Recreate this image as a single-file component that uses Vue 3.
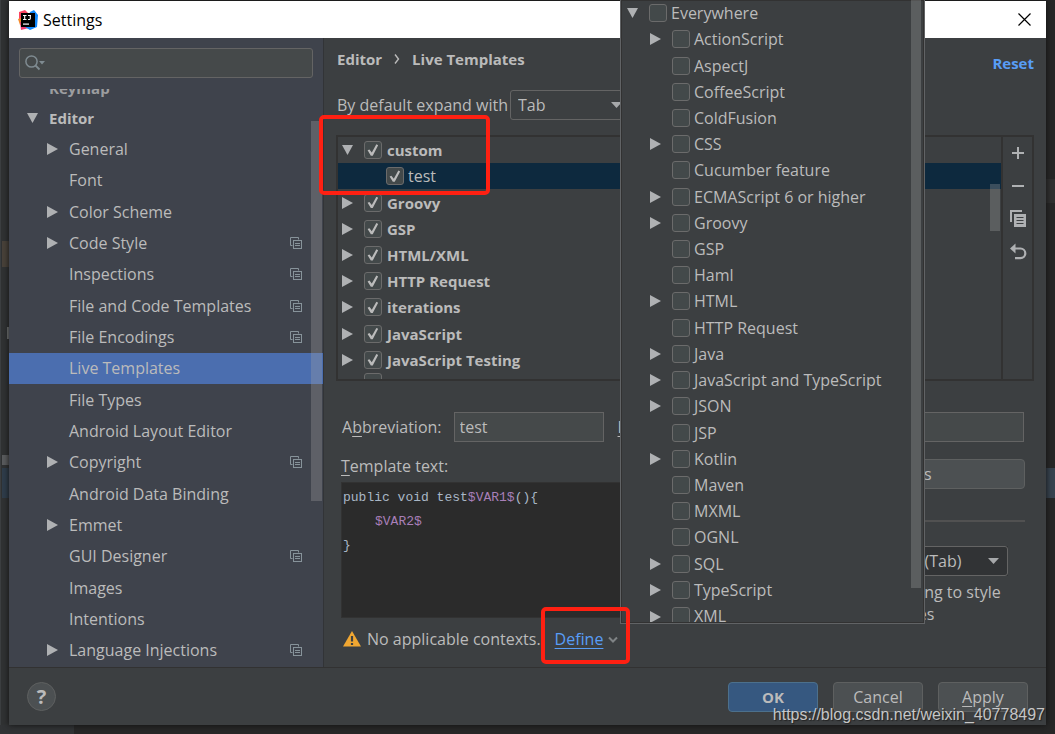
<script setup>
import { ref } from 'vue'

const expandWith = ref('Tab')
const expandTemplate = ref('Default (Tab)')
const abbreviation = ref('test')
const description = ref('')
const query = ref('')

const settings = [
  { name: 'General', arrow: true },
  { name: 'Font' },
  { name: 'Color Scheme', arrow: true },
  { name: 'Code Style', arrow: true, project: true },
  { name: 'Inspections', project: true },
  { name: 'File and Code Templates', project: true },
  { name: 'File Encodings', project: true },
  { name: 'Live Templates', selected: true },
  { name: 'File Types' },
  { name: 'Android Layout Editor' },
  { name: 'Copyright', arrow: true, project: true },
  { name: 'Android Data Binding' },
  { name: 'Emmet', arrow: true },
  { name: 'GUI Designer', project: true },
  { name: 'Images' },
  { name: 'Intentions' },
  { name: 'Language Injections', arrow: true, project: true },
]

const groups = ref([
  { name: 'custom', open: true, on: true },
  { name: 'test', child: true, on: true },
  { name: 'Groovy', on: true },
  { name: 'GSP', on: true },
  { name: 'HTML/XML', on: true },
  { name: 'HTTP Request', on: true },
  { name: 'iterations', on: true },
  { name: 'JavaScript', on: true },
  { name: 'JavaScript Testing', on: true },
])

const contexts = ref([
  { name: 'ActionScript', arrow: true },
  { name: 'AspectJ' },
  { name: 'CoffeeScript' },
  { name: 'ColdFusion' },
  { name: 'CSS', arrow: true },
  { name: 'Cucumber feature' },
  { name: 'ECMAScript 6 or higher', arrow: true },
  { name: 'Groovy', arrow: true },
  { name: 'GSP' },
  { name: 'Haml' },
  { name: 'HTML', arrow: true },
  { name: 'HTTP Request' },
  { name: 'Java', arrow: true },
  { name: 'JavaScript and TypeScript', arrow: true },
  { name: 'JSON', arrow: true },
  { name: 'JSP' },
  { name: 'Kotlin', arrow: true },
  { name: 'Maven' },
  { name: 'MXML' },
  { name: 'OGNL' },
  { name: 'SQL', arrow: true },
  { name: 'TypeScript', arrow: true },
  { name: 'XML', arrow: true },
])
</script>

<template>
  <div class="desktop">
    <div class="ide-left"><i class="mark brown"></i><i class="mark caret"></i><i class="mark grey"></i><i class="mark blue"></i></div>
    <div class="ide-right"><i class="mark band"></i><i class="mark line"></i><i class="mark blue"></i></div>
    <div class="ide-bottom"></div>

    <section class="dialog" aria-label="Settings">
      <header class="titlebar">
        <svg class="logo" width="20" height="20" viewBox="0 0 20 20">
          <path d="M1 2 7 0l4 4-5 9-5-3z" fill="#fc4462" />
          <path d="M0 9 5 7l3 9-6-1z" fill="#f58a2a" />
          <path d="M2 12l6-1 3 7-8 2z" fill="#ef3a72" />
          <path d="M12 2l4-2 4 5-1 12-7 3-5-3z" fill="#1188fb" />
          <rect x="3" y="3" width="14" height="14" fill="#000" />
          <path d="M5 5.500h3.500M6.700 5.500v4M5 9.500h3.500M10 5.500h3M12.300 5.500v3q0 1.300-2.300 1" stroke="#fff" stroke-width="1.100" fill="none" />
          <rect x="5" y="13.500" width="6" height="1.200" fill="#fff" />
        </svg>
        <h1>Settings</h1>
        <button class="close" aria-label="Close">
          <svg width="13" height="13" viewBox="0 0 13 13"><path d="M.5.5l12 12M12.500.5l-12 12" stroke="#000" stroke-width="1.200" /></svg>
        </button>
      </header>

      <div class="body">
        <aside class="sidebar">
          <div class="search">
            <svg width="20" height="16" viewBox="0 0 20 16">
              <circle cx="6.500" cy="6.500" r="5.600" fill="none" stroke="#7f8b91" stroke-width="1.500" />
              <path d="M10.500 10.500l4 4" stroke="#7f8b91" stroke-width="1.800" />
              <path d="M14 6h6l-3 3.500z" fill="#7f8b91" />
            </svg>
            <input v-model="query" type="text" aria-label="Search settings" />
          </div>
          <nav class="tree">
            <div class="row keymap"><a href="#">Keymap</a></div>
            <div class="row top">
              <button class="toggle" aria-label="Collapse Editor">
                <svg width="12" height="12" viewBox="0 0 12 12"><path d="M0 1h11L5.500 11z" fill="#afb1b3" /></svg>
              </button>
              <a href="#">Editor</a>
            </div>
            <div v-for="s in settings" :key="s.name" class="row" :class="{ selected: s.selected }">
              <button v-if="s.arrow" class="toggle" :aria-label="'Expand ' + s.name">
                <svg width="12" height="12" viewBox="0 0 12 12"><path d="M0 0v12l11-6z" fill="#afb1b3" /></svg>
              </button>
              <span v-else class="toggle"></span>
              <a href="#">{{ s.name }}</a>
              <svg v-if="s.project" class="project" width="12" height="12" viewBox="0 0 12 12">
                <path d="M2.500 8.500h-2v-8h8v2" fill="none" stroke="#87939a" />
                <rect x="3.500" y="3.500" width="8" height="8" fill="none" stroke="#87939a" />
                <path d="M5 6.500h5M5 8.500h5" stroke="#87939a" />
              </svg>
            </div>
          </nav>
          <i class="thumb"></i>
        </aside>

        <main class="content">
          <div class="crumbs">
            <h2>Editor</h2>
            <svg width="6" height="10" viewBox="0 0 6 10"><path d="M1 .5L4.500 5 1 9.500" fill="none" stroke="#bbb" stroke-width="1.400" /></svg>
            <h2>Live Templates</h2>
            <button class="reset">Reset</button>
          </div>

          <div class="expand">
            <label for="expand-with">By default expand with</label>
            <div class="combo">
              <select id="expand-with" v-model="expandWith"><option>Tab</option></select>
              <svg width="12" height="7" viewBox="0 0 12 7"><path d="M0 0h11L5.500 6z" fill="#a6a8aa" /></svg>
            </div>
          </div>

          <div class="templates">
            <div class="groups">
              <div v-for="g in groups" :key="g.name" class="row" :class="{ child: g.child }">
                <button v-if="!g.child" class="toggle" :aria-label="'Toggle ' + g.name">
                  <svg width="12" height="12" viewBox="0 0 12 12">
                    <path v-if="g.open" d="M0 1h11L5.500 11z" fill="#afb1b3" />
                    <path v-else d="M0 0v12l11-6z" fill="#afb1b3" />
                  </svg>
                </button>
                <label><input v-model="g.on" type="checkbox" />{{ g.name }}</label>
              </div>
              <div class="row cut"><input type="checkbox" aria-label="Next group" /></div>
              <i class="thumb"></i>
            </div>
            <div class="tools">
              <button aria-label="Add"><svg width="18" height="18" viewBox="0 0 18 18"><path d="M9 3v12M3 9h12" stroke="#afb1b3" stroke-width="2" /></svg></button>
              <button aria-label="Remove"><svg width="18" height="18" viewBox="0 0 18 18"><path d="M3 9h12" stroke="#afb1b3" stroke-width="2" /></svg></button>
              <button aria-label="Duplicate">
                <svg width="18" height="18" viewBox="0 0 18 18">
                  <path d="M2 12V1h11" fill="none" stroke="#afb1b3" stroke-width="2" />
                  <rect x="5" y="4" width="12" height="13" fill="#afb1b3" />
                  <path d="M7.500 7.500h7M7.500 10.500h7M7.500 13.500h7" stroke="#3c3f41" stroke-width="1.200" />
                </svg>
              </button>
              <button aria-label="Restore">
                <svg width="18" height="18" viewBox="0 0 18 18">
                  <path d="M6 5.500h5.500a4.800 4.800 0 0 1 0 9.600H6" fill="none" stroke="#afb1b3" stroke-width="2.200" />
                  <path d="M6.500.5v10L1 5.500z" fill="#afb1b3" />
                </svg>
              </button>
            </div>
          </div>

          <div class="names">
            <label for="abbr">A<u>b</u>breviation:</label>
            <input id="abbr" v-model="abbreviation" class="field" type="text" />
            <label for="desc"><u>D</u>escription:</label>
            <input id="desc" v-model="description" class="field grow" type="text" />
          </div>

          <div class="detail">
            <div class="source">
              <span id="source-label" class="caption"><u>T</u>emplate text:</span>
              <div class="code" contenteditable="true" role="textbox" aria-multiline="true" aria-labelledby="source-label" spellcheck="false">
                <div><span>public void test</span><b>$VAR1$</b><span>(){</span></div>
                <div class="indent"><b>$VAR2$</b></div>
                <div><span>}</span></div>
              </div>
              <div class="status">
                <svg width="18" height="16" viewBox="0 0 18 16">
                  <path d="M9 0l9 15.500H0z" fill="#f0a732" />
                  <path d="M9 5v5.500M9 12v2" stroke="#3c3f41" stroke-width="2.200" />
                </svg>
                <span>No applicable contexts.</span>
                <a href="#" class="define">Define</a>
                <svg width="10" height="7" viewBox="0 0 10 7"><path d="M1 1.500l4 4 4-4" fill="none" stroke="#7f8385" stroke-width="2" /></svg>
              </div>
            </div>
            <div class="options">
              <button class="btn">Edit variables</button>
              <div class="section"><span>Options</span><hr /></div>
              <div class="line">
                <label for="tpl-expand">Expand with</label>
                <div class="combo wide">
                  <select id="tpl-expand" v-model="expandTemplate"><option>Default (Tab)</option></select>
                  <svg width="12" height="7" viewBox="0 0 12 7"><path d="M0 0h11L5.500 6z" fill="#a6a8aa" /></svg>
                </div>
              </div>
              <label class="opt"><input type="checkbox" />Reformat according to style</label>
              <label class="opt"><input type="checkbox" />Shorten FQ names</label>
            </div>
          </div>
        </main>
      </div>

      <footer class="footer">
        <button class="help" aria-label="Help">?</button>
        <button class="btn primary">OK</button>
        <button class="btn">Cancel</button>
        <button class="btn"><u>A</u>pply</button>
      </footer>
    </section>

    <section class="popup" aria-label="Applicable contexts">
      <div class="row root">
        <button class="toggle" aria-label="Collapse Everywhere">
          <svg width="12" height="12" viewBox="0 0 12 12"><path d="M0 1h11L5.500 11z" fill="#afb1b3" /></svg>
        </button>
        <label><input type="checkbox" />Everywhere</label>
      </div>
      <div v-for="c in contexts" :key="c.name" class="row">
        <button v-if="c.arrow" class="toggle" :aria-label="'Expand ' + c.name">
          <svg width="12" height="12" viewBox="0 0 12 12"><path d="M0 0v12l11-6z" fill="#afb1b3" /></svg>
        </button>
        <span v-else class="toggle"></span>
        <label><input v-model="c.on" type="checkbox" />{{ c.name }}</label>
      </div>
      <i class="thumb"></i>
    </section>

    <i class="callout first"></i>
    <i class="callout second"></i>
    <span class="watermark">https://blog.csdn.net/weixin_40778497</span>
  </div>
</template>

<style>
body { background: #2b2b2b; }
</style>

<style scoped>
* { box-sizing: border-box; }
.desktop {
  position: relative;
  height: 100vh;
  display: flex;
  padding: 1px 9px 9px;
  overflow: hidden;
  background: #272727;
  color: #bbbbbb;
  font: 16px/24px "Open Sans", "Noto Sans", sans-serif;
}
button, input, select { font: inherit; color: inherit; margin: 0; }
button { background: none; border: 0; padding: 0; display: flex; align-items: center; justify-content: center; }
svg { display: block; flex: none; }
a { color: inherit; text-decoration: none; }
u { text-underline-offset: 3px; }
h1, h2 { margin: 0; font-size: 16px; }

.ide-left, .ide-right { position: absolute; top: 0; bottom: 0; width: 9px; }
.ide-left { left: 0; background: #303233; border-left: 1px solid #3c3f41; }
.ide-right { right: 0; background: #272727; }
.ide-bottom { position: absolute; left: 0; bottom: 0; width: 74px; height: 9px; background: #313335; }
.mark { position: absolute; left: 1px; right: 0; }
.brown { top: 241px; height: 26px; background: #49423a; }
.caret { top: 327px; height: 12px; left: 6px; background: #77797a; }
.grey { top: 455px; height: 10px; background: #5a5c5e; }
.ide-left .blue { top: 468px; height: 30px; background: #2f3d4b; }
.ide-right .mark { left: 0; }
.band { top: 179px; height: 24px; background: #303030; }
.line { top: 437px; height: 31px; background: #313335; }
.ide-right .blue { top: 468px; height: 30px; background: #37434f; }

.dialog { position: relative; flex: 1; min-width: 0; display: flex; flex-direction: column; background: #3c3f41; box-shadow: 0 0 6px #111; }
.titlebar { display: flex; align-items: center; height: 37px; padding: 0 15px 0 9px; background: #fff; color: #000; flex: none; }
.titlebar h1 { flex: 1; margin-left: 5px; font-weight: 400; }
.body { flex: 1; min-height: 0; display: flex; }

.sidebar { position: relative; width: 315px; flex: none; display: flex; flex-direction: column; background: #3f434c; border-right: 1px solid #323437; }
.search { display: flex; align-items: center; height: 30px; margin: 10px 10px 11px; padding: 0 5px; border: 1px solid #646464; border-radius: 3px; background: #45494a; flex: none; }
.search input { flex: 1; min-width: 0; border: 0; background: none; outline: 0; }
.tree { flex: 1; min-height: 0; display: grid; grid-template-rows: 13px repeat(18, minmax(0, 1fr)); overflow: hidden; padding-bottom: 1px; }
.row { display: flex; align-items: center; min-height: 0; white-space: nowrap; }
.toggle { width: 12px; height: 12px; flex: none; }
.tree .row { padding: 0 21px 0 38px; }
.tree .row a { flex: 1; margin-left: 10px; }
.tree .row.top { padding-left: 18px; font-weight: 700; font-size: 15px; }
.tree .row.keymap { padding: 0 0 2px 30px; font-weight: 700; font-size: 15px; align-items: flex-end; overflow: hidden; opacity: .75; }
.tree .row.selected { background: #4b6eaf; }
.thumb { position: absolute; background: rgba(166, 166, 166, .3); }
.sidebar .thumb { right: 1px; top: 83px; width: 11px; height: 380px; }

.content { flex: 1; min-width: 0; display: flex; flex-direction: column; padding: 0 12px 0 12px; }
.crumbs { display: flex; align-items: center; gap: 12px; height: 42px; padding-left: 1px; }
.crumbs h2 { font-size: 15px; }
.reset { margin-left: auto; color: #589df6; font-size: 15px; font-weight: 700; padding-top: 7px; }
.expand { display: flex; align-items: center; gap: 2px; height: 49px; padding-left: 1px; }
.combo { position: relative; display: flex; align-items: center; width: 121px; height: 30px; border: 1px solid #646464; border-radius: 3px; }
.combo select { appearance: none; width: 100%; height: 28px; padding: 0 7px; border: 0; background: none; outline: 0; }
.combo svg { position: absolute; right: 7px; top: 11px; pointer-events: none; }

.templates { display: flex; height: 246px; margin-top: 6px; border: 2px solid #323232; flex: none; }
.groups { position: relative; flex: 1; display: grid; grid-template-rows: repeat(9, minmax(0, 1fr)) 6px; overflow: hidden; }
.groups .row { padding-left: 4px; font-weight: 700; font-size: 15px; }
.groups .row label, .popup .row label { display: flex; align-items: center; gap: 4px; margin-left: 10px; }
.groups .row:not(.child) label { gap: 5px; }
.groups .row.child { padding-left: 38px; font-weight: 400; font-size: 16px; background: #0d293e; }
.groups .row.cut { align-items: flex-start; padding-left: 26px; overflow: hidden; }
.groups .thumb { right: 1px; top: 47px; width: 10px; height: 47px; }
.tools { display: flex; flex-direction: column; align-items: center; gap: 15px; width: 31px; padding-top: 7px; border-left: 2px solid #323232; }

input[type="checkbox"] { appearance: none; position: relative; width: 18px; height: 18px; flex: none; border: 1px solid #6b6b6b; border-radius: 3px; background: #43494a; }
input[type="checkbox"]:checked::before { content: ""; position: absolute; inset: 2px; background: #bbbbbb; clip-path: polygon(5% 52%, 20% 45%, 40% 70%, 78% 2%, 93% 10%, 48% 96%, 32% 96%); }

.names { display: flex; align-items: center; height: 30px; margin-top: 31px; padding: 0 10px 0 6px; flex: none; }
.field { width: 150px; height: 30px; margin: 0 14px 0 12px; padding: 0 5px; border: 1px solid #646464; background: #45494a; outline: 0; }
.field.grow { flex: 1; min-width: 0; margin-right: 0; }
.detail { flex: 1; min-height: 0; display: flex; gap: 20px; padding: 0 9px 0 5px; }
.source { flex: 1; min-width: 0; display: flex; flex-direction: column; }
.caption { margin-top: 12px; }
.code { height: 136px; margin: 4px 0 0; padding: 3px 0 0 1px; border: 1px solid #323232; background: #2b2b2b; color: #a9b7c6; font: 13px/24px "Liberation Mono", monospace; outline: 0; }
.code div { display: flex; }
.code .indent { padding-left: 32px; }
.code b { font-weight: 400; color: #a87fb8; }
.status { display: flex; align-items: center; height: 42px; padding-left: 2px; }
.status span { margin: 0 14px 0 6px; }
.define { color: #589df6; text-decoration: underline; text-underline-offset: 3px; margin-right: 5px; }
.options { width: 286px; flex: none; padding-top: 17px; }
.btn { width: 90px; height: 30px; border: 1px solid #5e6060; border-radius: 4px; background: #4c5052; }
.options .btn { width: 100%; }
.section { display: flex; align-items: center; gap: 8px; margin-top: 20px; }
.section hr { flex: 1; margin: 0; border: 0; border-top: 2px solid #515151; }
.line { display: flex; align-items: center; justify-content: space-between; height: 30px; margin: 13px 17px 5px 12px; }
.combo.wide { width: 150px; }
.opt { display: flex; align-items: center; gap: 5px; margin-left: 34px; height: 22px; white-space: nowrap; }

.footer { display: flex; align-items: center; gap: 15px; height: 58px; padding: 0 18px; border-top: 1px solid #323232; flex: none; }
.help { width: 29px; height: 29px; margin-right: auto; border: 1px solid #5e6060; border-radius: 50%; background: #4c5052; font-size: 20px; font-weight: 700; }
.primary { background: #365880; border-color: #4c708c; font-size: 15px; font-weight: 700; }

.popup { position: absolute; left: 620px; right: 130px; top: 0; bottom: 110px; display: grid; grid-template-rows: repeat(23, minmax(0, 1fr)) 19px; padding-bottom: 1px; overflow: hidden; background: #3c3f41; border: solid #616365; border-width: 0 1px 1px; box-shadow: inset 0 0 0 1px #323232; }
.popup .row { padding-left: 29px; overflow: hidden; }
.popup .row.root { padding-left: 6px; }
.popup .row:nth-child(24) { align-items: flex-start; }
.popup .row:nth-child(24) .toggle { margin-top: 8px; }
.popup .row:nth-child(24) label { margin-top: 1px; }
.popup .thumb { right: 3px; top: 0; bottom: 35px; width: 10px; }

.callout { position: absolute; border: 4px solid #ff2012; border-radius: 5px; pointer-events: none; }
.first { left: 319px; top: 115px; width: 171px; height: 80px; }
.second { left: 541px; top: 607px; width: 89px; height: 57px; }
.watermark { position: absolute; right: 10px; bottom: 7px; color: rgba(225, 225, 225, .85); font: 16px/24px "Liberation Sans", Arial, sans-serif; text-shadow: 1px 1px 1px #222; }
</style>
